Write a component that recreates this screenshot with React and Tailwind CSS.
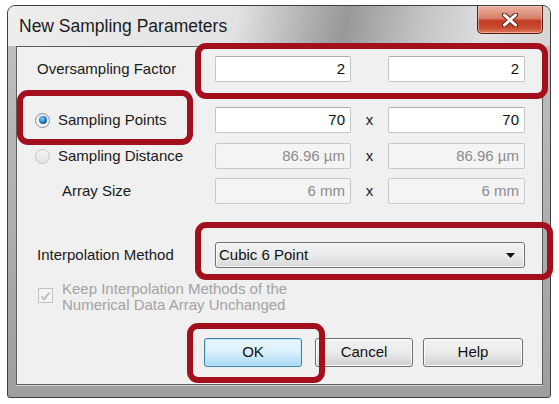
import React from 'react';

const font = { fontFamily: '"Liberation Sans", Arial, sans-serif' };

function TextBox({ value, disabled, w = 'w-[136px]' }) {
  return (
    <div
      className={`${w} h-[26px] flex items-center justify-end pr-[5px] rounded-[2px] border text-[15px] ${
        disabled
          ? 'bg-[#f4f4f4] border-[#c9c9c9] text-[#8c8c8c]'
          : 'bg-white border-[#c3c6ca] border-t-[#abadb3] text-[#111]'
      }`}
    >
      {value}
    </div>
  );
}

function Radio({ checked, disabled }) {
  return (
    <div
      className={`w-[15px] h-[15px] rounded-full border flex items-center justify-center ${
        disabled
          ? 'border-[#c4c4c4] bg-gradient-to-b from-[#f4f4f4] to-[#e2e2e2]'
          : 'border-[#8a8f96] bg-gradient-to-b from-[#e6e6e6] to-[#fafafa]'
      }`}
    >
      {checked && (
        <div className="w-[8px] h-[8px] rounded-full bg-[radial-gradient(circle_at_40%_35%,#7fd0ff,#1a6bb0_60%,#0d3f74)]" />
      )}
    </div>
  );
}

function Btn({ children, focused, w }) {
  return (
    <div
      className={`${w} h-[29px] rounded-[3px] border flex items-center justify-center text-[15px] text-[#111] ${
        focused
          ? 'border-[#3c7fb1] bg-gradient-to-b from-[#eaf6fd] via-[#d9f0fc] to-[#a7d9f5] shadow-[inset_0_0_0_1px_#bfe6fb]'
          : 'border-[#707070] bg-gradient-to-b from-[#f2f2f2] via-[#ebebeb] to-[#cfcfcf] shadow-[inset_0_0_0_1px_#fcfcfc]'
      }`}
    >
      {children}
    </div>
  );
}

function Mark({ className }) {
  return (
    <div
      className={`absolute border-[6px] border-[#a30f1c] rounded-[11px] pointer-events-none ${className}`}
    />
  );
}

export default function App() {
  return (
    <div className="relative w-[559px] h-[404px] bg-white overflow-hidden" style={font}>
      {/* window */}
      <div className="ml-[7px] mt-[5px] w-[544px] h-[393px] rounded-t-[8px] rounded-b-[3px] border border-[#3f3f3f] flex flex-col bg-gradient-to-b from-[#c2c2c2] to-[#9e9e9e]">
        {/* title bar */}
        <div className="h-[40px] flex justify-between rounded-t-[7px] bg-[linear-gradient(100deg,#eeeeee_0%,#e2e2e2_42%,#b0b0b0_55%,#989898_62%,#c4c4c4_76%,#e0e0e0_88%,#d4d4d4_100%)]">
          <div className="pl-[11px] flex items-center text-[17.5px] text-[#1b1b1b]">
            New Sampling Parameters
          </div>
          <div className="mr-[7px] w-[66px] h-[28px] rounded-b-[5px] border border-t-0 border-[#5a1a12] bg-[linear-gradient(to_bottom,#eab1a2_0%,#d8816b_45%,#c33a22_55%,#c84a30_80%,#e07a5c_100%)] flex items-center justify-center shadow-[inset_0_0_0_1px_rgba(255,220,210,0.5)]">
            <svg width="16" height="14" viewBox="0 0 16 14">
              <path
                d="M2 1.5 L14 12.5 M14 1.5 L2 12.5"
                stroke="#6b2a1c"
                strokeWidth="5"
                strokeLinecap="round"
              />
              <path
                d="M2.5 2 L13.5 12 M13.5 2 L2.5 12"
                stroke="#ffffff"
                strokeWidth="3"
                strokeLinecap="round"
              />
            </svg>
          </div>
        </div>

        {/* client area */}
        <div className="ml-[8px] mr-[7px] mb-[12px] flex-1 bg-[#f0f0f0] border border-[#5e5e5e] shadow-[0_1px_0_#d8d8d8] flex flex-col text-[15px] text-[#1a1a1a]">
          {/* oversampling */}
          <div className="mt-[9px] h-[26px] flex items-center">
            <div className="w-[198px] pl-[20px]">Oversampling Factor</div>
            <TextBox value="2" />
            <div className="w-[37px]" />
            <TextBox value="2" w="w-[137px]" />
          </div>

          {/* sampling points */}
          <div className="mt-[25px] h-[26px] flex items-center">
            <div className="w-[198px] pl-[18px] flex items-center gap-[8px]">
              <Radio checked />
              <span>Sampling Points</span>
            </div>
            <TextBox value="70" />
            <div className="w-[37px] text-center">x</div>
            <TextBox value="70" w="w-[137px]" />
          </div>

          {/* sampling distance */}
          <div className="mt-[10px] h-[26px] flex items-center">
            <div className="w-[198px] pl-[18px] flex items-center gap-[8px] text-[#1a1a1a]">
              <Radio disabled />
              <span>Sampling Distance</span>
            </div>
            <TextBox value="86.96 µm" disabled />
            <div className="w-[37px] text-center">x</div>
            <TextBox value="86.96 µm" disabled w="w-[137px]" />
          </div>

          {/* array size */}
          <div className="mt-[9px] h-[26px] flex items-center">
            <div className="w-[198px] pl-[45px]">Array Size</div>
            <TextBox value="6 mm" disabled />
            <div className="w-[37px] text-center">x</div>
            <TextBox value="6 mm" disabled w="w-[137px]" />
          </div>

          {/* interpolation */}
          <div className="mt-[38px] h-[26px] flex items-center">
            <div className="w-[198px] pl-[20px]">Interpolation Method</div>
            <div className="w-[310px] h-[26px] rounded-[3px] border border-[#707070] bg-gradient-to-b from-[#f3f3f3] via-[#ebebeb] to-[#d9d9d9] shadow-[inset_0_0_0_1px_#fafafa] flex items-center justify-between pl-[3px] pr-[9px] text-[#111]">
              <span>Cubic 6 Point</span>
              <svg width="9" height="5" viewBox="0 0 9 5">
                <path d="M0 0 H9 L4.5 5 Z" fill="#111" />
              </svg>
            </div>
          </div>

          {/* keep checkbox */}
          <div className="mt-[13px] flex items-start">
            <div className="ml-[21px] mt-[7px] w-[15px] h-[15px] border border-[#c2c2c2] bg-[#f4f4f4] flex items-center justify-center">
              <svg width="11" height="10" viewBox="0 0 11 10">
                <path d="M1.5 5.5 L4.2 8.3 L9.5 1.5" stroke="#b9b9b9" strokeWidth="1.8" fill="none" />
              </svg>
            </div>
            <div className="ml-[9px] flex flex-col text-[#a3a3a3]">
              <span className="leading-[16px]">Keep Interpolation Methods of the</span>
              <span className="leading-[16px]">Numerical Data Array Unchanged</span>
            </div>
          </div>

          {/* buttons */}
          <div className="mt-[25px] flex items-center">
            <div className="ml-[187px]">
              <Btn focused w="w-[98px]">OK</Btn>
            </div>
            <div className="ml-[13px]">
              <Btn w="w-[98px]">Cancel</Btn>
            </div>
            <div className="ml-[10px]">
              <Btn w="w-[100px]">Help</Btn>
            </div>
          </div>
        </div>
      </div>

      {/* annotation marks */}
      <Mark className="left-[195px] top-[43px] w-[353px] h-[56px]" />
      <Mark className="left-[17px] top-[90px] w-[176px] h-[55px]" />
      <Mark className="left-[195px] top-[222px] w-[358px] h-[58px]" />
      <Mark className="left-[187px] top-[323px] w-[138px] h-[60px]" />
    </div>
  );
}
